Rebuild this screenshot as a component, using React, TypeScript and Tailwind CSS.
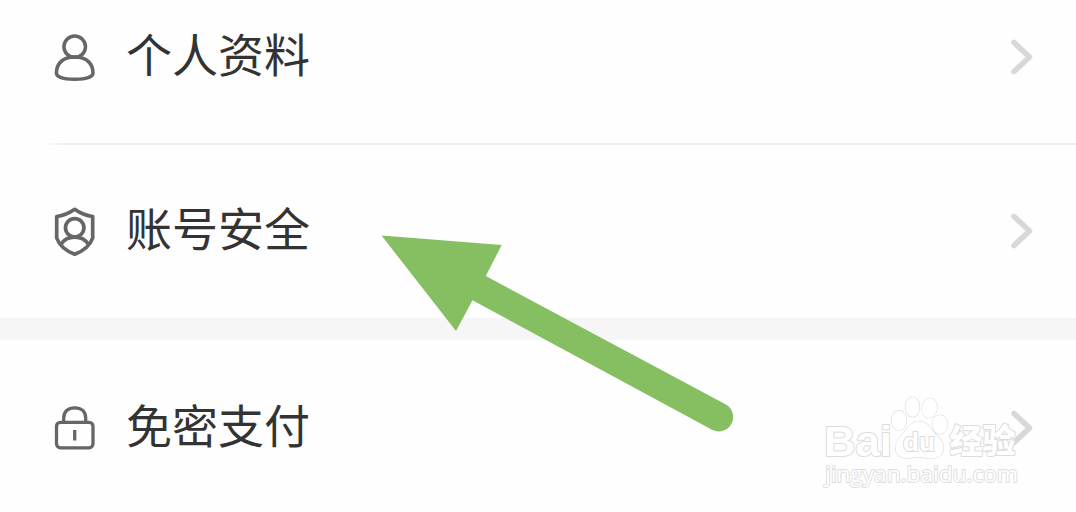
import type { ReactNode } from "react";

const UserIcon = () => (
  <svg
    viewBox="0 0 60 60"
    className="h-[60px] w-[60px] fill-none stroke-[#666]"
    strokeWidth="3.5"
  >
    <ellipse cx="29.7" cy="19.7" rx="10.8" ry="10.6" />
    <path d="M29.7 30C17.5 30 11.4 37 11.4 46C11.4 50 18.5 52.2 29.7 52.2C40.9 52.2 48 50 48 46C48 37 42 30 29.7 30Z" />
  </svg>
);

const ShieldIcon = () => (
  <svg
    viewBox="0 0 60 60"
    className="h-[60px] w-[60px] fill-none stroke-[#666]"
    strokeWidth="3.7"
    strokeLinejoin="round"
  >
    <path d="M29.7 8.3C24 12.3 18.500 14.800 11.700 15.500V37C14.200 44 21 50 29.700 53.200C38.400 50 45.200 44 47.700 37V15.500C40.900 14.800 35.400 12.300 29.700 8.300Z" />
    <circle cx="29.7" cy="26.8" r="9.2" />
    <path d="M16 43.500C19 38.500 23.800 36.200 29.700 36.200C35.600 36.200 40.400 38.500 43.400 43.500" />
  </svg>
);

const LockIcon = () => (
  <svg
    viewBox="0 0 60 60"
    className="h-[60px] w-[60px] fill-none stroke-[#666]"
    strokeWidth="3.3"
  >
    <rect x="11.5" y="24.3" width="36.5" height="25.5" rx="4" />
    <path d="M18.700 24.300V20C18.700 13.500 23 9.900 29.700 9.900C36.400 9.900 40.700 13.500 40.700 20V24.300" />
    <path d="M29.700 32V42.500" />
  </svg>
);

function Row({
  icon,
  label,
  className,
}: {
  icon: ReactNode;
  label: string;
  className: string;
}) {
  return (
    <div
      className={`flex w-full shrink-0 items-center pr-[40px] pl-[45px] ${className}`}
    >
      {icon}
      <p className="mb-[10px] ml-[21px] flex-1 text-[46px] leading-[60px] text-[#333]">
        {label}
      </p>
      <svg
        viewBox="0 0 26 40"
        className="h-10 w-[26px] fill-none stroke-[#d8d8d8]"
        strokeWidth="5.5"
        strokeLinecap="round"
        strokeLinejoin="round"
      >
        <path d="M4 5.500L19.500 20L4 34.500" />
      </svg>
    </div>
  );
}

function Watermark() {
  return (
    <svg
      viewBox="0 0 204 104"
      className="absolute top-[390px] left-[820px] h-[104px] w-[204px] fill-white stroke-[#dcdcdc] [paint-order:stroke]"
      strokeWidth="2"
      strokeLinejoin="round"
    >
      <text
        x="4"
        y="66"
        textLength="68"
        lengthAdjust="spacingAndGlyphs"
        fontSize="43"
        fontWeight="700"
        fontFamily="Liberation Sans, sans-serif"
      >
        Bai
      </text>
      <g strokeWidth="1.2">
        <ellipse cx="79" cy="30.500" rx="7.500" ry="9.800" />
        <ellipse cx="92.500" cy="17" rx="7" ry="10" />
        <ellipse cx="109.500" cy="18" rx="7.500" ry="9.800" transform="rotate(10 109.500 18)" />
        <ellipse cx="120" cy="34.500" rx="7.500" ry="9.500" />
        <path d="M98.500 31.500C91 31.500 88 37 84.500 42C79 47.500 75.500 52 75.500 58C75.500 64 80 68.500 88 68C95 67 102 67 109 68.500C117 69 123 65.500 123.500 58C124 51 118 47 113.500 42C109.500 36 106 31.500 98.500 31.500Z" />
      </g>
      <text
        x="83"
        y="61"
        textLength="32"
        lengthAdjust="spacingAndGlyphs"
        fontSize="25"
        fontWeight="700"
        fontFamily="Liberation Sans, sans-serif"
      >
        du
      </text>
      <text
        x="129.5"
        y="63"
        textLength="66"
        fontSize="33"
        fontWeight="900"
        fontFamily="Noto Sans CJK SC, sans-serif"
      >
        经验
      </text>
      <text
        x="5"
        y="92"
        textLength="193"
        lengthAdjust="spacingAndGlyphs"
        fontSize="22"
        fontWeight="500"
        strokeWidth="1.8"
        fontFamily="Open Sans, sans-serif"
      >
        jingyan.baidu.com
      </text>
    </svg>
  );
}

export default function App() {
  return (
    <div className="relative flex h-[512px] w-[1076px] flex-col overflow-hidden bg-[#fefefe] font-['Noto_Sans_CJK_SC',sans-serif]">
      <Row icon={<UserIcon />} label="个人资料" className="h-[143px] pb-[29px]" />
      <hr className="ml-[40px] h-[2px] shrink-0 border-0 bg-linear-to-r from-[#fefefe] to-[#eee] to-[24px]" />
      <Row icon={<ShieldIcon />} label="账号安全" className="h-[173px] pb-[2px]" />
      <div className="h-[22px] w-full shrink-0 bg-[#f6f6f6]" />
      <Row icon={<LockIcon />} label="免密支付" className="h-[176px]" />

      {/* pointer to the account security row */}
      <svg
        viewBox="0 0 360 210"
        className="absolute top-[230px] left-[376px] h-[210px] w-[360px] fill-[#85bf61]"
      >
        <path d="M5.500 5.500L125.700 15L109.800 46L349 174A14 14 0 0 1 336.500 200L96.500 70.300L80 101Z" />
      </svg>

      <Watermark />
    </div>
  );
}
